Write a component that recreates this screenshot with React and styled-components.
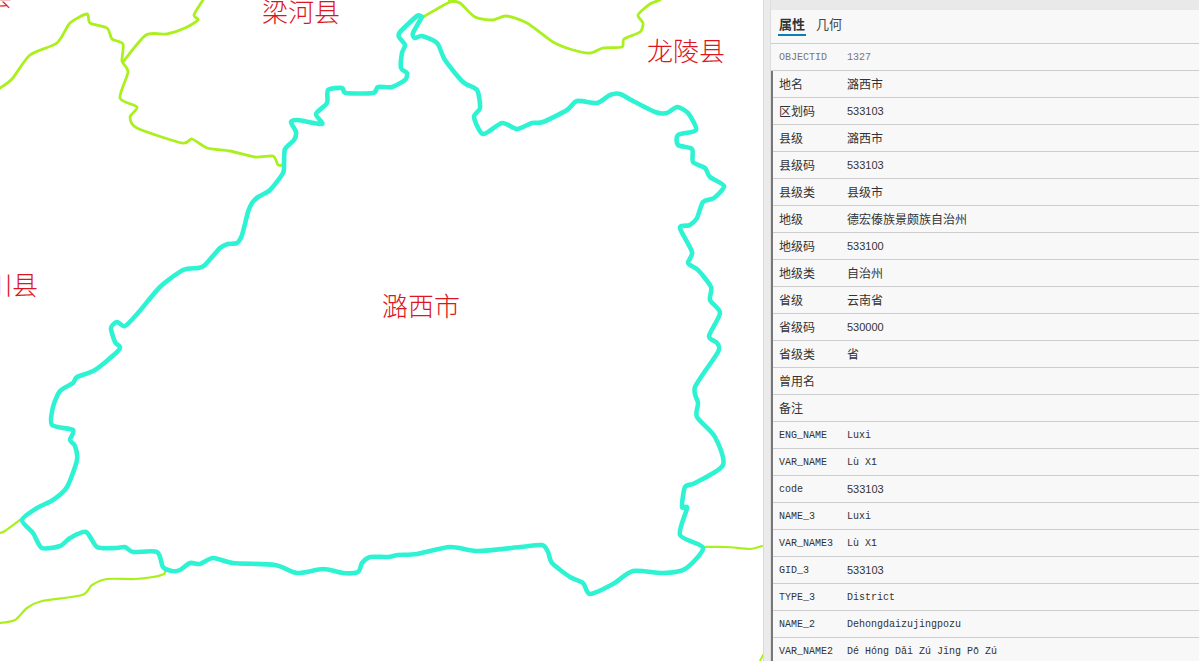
import React from "react";
import styled, { createGlobalStyle } from "styled-components";

const GlobalStyle = createGlobalStyle`
  html, body {
    margin: 0;
    padding: 0;
    background: #fff;
    overflow: hidden;
  }
  * {
    box-sizing: border-box;
  }
`;

const CJK = `"Noto Sans CJK SC", "Liberation Sans", sans-serif`;

// county boundary, traced counter-clockwise from the northern tip
const boundary =
  "422,17 417,16 400,32 399,37 405,45 402,53 401,68 407,73 405,80 392,87 378,87 373,93 346,93 342,88 328,90 327,103 316,114 322,124 298,120 291,122 296,132 294,140 285,149 284,163 283,173 270,190 258,197 252,203 248,212 242,235 237,243 228,244 220,248 205,265 198,268 183,270 160,287 138,313 125,326 117,322 111,328 115,342 120,347 117,352 95,370 77,377 73,383 60,391 53,407 52,425 73,430 70,440 75,446 77,460 67,487 53,500 37,508 22,520 33,533 42,548 60,546 70,538 86,532 97,547 115,548 125,547 133,552 157,552 163,567 172,571 180,570 190,563 200,564 213,558 233,563 275,565 297,573 323,569 343,573 358,572 362,563 370,557 388,557 398,555 417,554 450,547 478,551 520,547 542,545 548,552 552,563 570,577 583,583 590,594 613,584 633,571 663,573 685,569 703,548 680,535 687,508 682,507 685,487 695,483 723,465 715,437 697,417 698,403 695,387 718,352 717,343 709,336 720,313 710,300 711,287 698,270 688,263 692,252 680,228 690,225 697,218 703,202 714,198 724,186 710,177 705,168 693,162 692,149 678,145 678,135 696,130 688,113 677,107 667,113 655,112 635,102 620,94 610,95 597,103 577,101 567,110 543,122 532,123 517,129 502,123 483,134 474,117 480,108 477,90 463,82 445,60 437,43 422,36 415,38 413,33 422,17";

const neighbours = [
  { width: 2.8, points: "0,88 12,79 30,55 57,43 70,23 87,14 90,23 107,28 112,39 123,44 122,61 128,72 120,98 137,107 130,117 137,128 182,143 192,139 207,148 230,151 255,157 273,156 278,165 283,165" },
  { width: 2.8, points: "123,62 146,35 167,34 185,28 198,20 194,15 203,0" },
  { width: 2.8, points: "423,17 450,2 460,3 475,17 493,20 506,16 527,23 553,42 573,50 590,53 603,48 622,47 624,39 640,32 643,23 638,15 650,4 660,0" },
  { width: 2.2, points: "449,0 450,2" },
  { width: 2.2, points: "0,533 5,531 20,520" },
  { width: 2.2, points: "165,571 164,574 153,577 135,579 107,579 92,585 82,595 42,601 27,608 15,620 0,623" },
  { width: 2.2, points: "703,547 727,547 750,549 762,546" },
  { width: 2, points: "760,661 763,655" },
];

const labels = [
  { text: "县", x: -14, y: -21 },
  { text: "梁河县", x: 262, y: -5 },
  { text: "龙陵县", x: 647, y: 34 },
  { text: "川县", x: -14, y: 268 },
  { text: "潞西市", x: 382, y: 289 },
];

const rows = [
  ["地名", "潞西市"],
  ["区划码", "533103"],
  ["县级", "潞西市"],
  ["县级码", "533103"],
  ["县级类", "县级市"],
  ["地级", "德宏傣族景颇族自治州"],
  ["地级码", "533100"],
  ["地级类", "自治州"],
  ["省级", "云南省"],
  ["省级码", "530000"],
  ["省级类", "省"],
  ["曾用名", ""],
  ["备注", ""],
  ["ENG_NAME", "Luxi"],
  ["VAR_NAME", "Lù Xī"],
  ["code", "533103"],
  ["NAME_3", "Luxi"],
  ["VAR_NAME3", "Lù Xī"],
  ["GID_3", "533103"],
  ["TYPE_3", "District"],
  ["NAME_2", "Dehongdaizujingpozu"],
  ["VAR_NAME2", "Dé Hóng Dǎi Zú Jǐng Pō Zú"],
];

const kindOf = (s) => {
  if (/^\d+$/.test(s)) return "num";
  if (/[\u4e00-\u9fff]/.test(s)) return "cjk";
  return "latin";
};

// soft curve through the traced points, the map lines have no hard kinks
const smoothPath = (str) => {
  const p = str.split(" ").map((xy) => xy.split(",").map(Number));
  let d = `M${p[0][0]} ${p[0][1]}`;
  for (let i = 0; i < p.length - 1; i++) {
    const a = p[Math.max(i - 1, 0)];
    const b = p[i];
    const c = p[i + 1];
    const e = p[Math.min(i + 2, p.length - 1)];
    const c1x = (b[0] + (c[0] - a[0]) / 8).toFixed(1);
    const c1y = (b[1] + (c[1] - a[1]) / 8).toFixed(1);
    const c2x = (c[0] - (e[0] - b[0]) / 8).toFixed(1);
    const c2y = (c[1] - (e[1] - b[1]) / 8).toFixed(1);
    d += `C${c1x} ${c1y} ${c2x} ${c2y} ${c[0]} ${c[1]}`;
  }
  return d;
};

const Page = styled.div`
  display: flex;
  width: 1199px;
  height: 661px;
  overflow: hidden;
`;

const MapPane = styled.div`
  position: relative;
  width: 763px;
  flex: none;
  background: #fff;
  overflow: hidden;
`;

const MapLines = styled.svg`
  position: absolute;
  inset: 0;
  width: 763px;
  height: 661px;
  fill: none;
  stroke-linejoin: round;
  stroke-linecap: round;
`;

const MapLabel = styled.span`
  position: absolute;
  font-family: ${CJK};
  font-size: 26px;
  line-height: 32px;
  font-weight: 300;
  color: #dc1620;
  white-space: nowrap;
`;

const Gutter = styled.div`
  width: 7px;
  flex: none;
  background: #ebebeb;
  border-left: 1px solid #d9d9d9;
`;

const Panel = styled.div`
  flex: 1;
  min-width: 0;
  display: flex;
  flex-direction: column;
  background: #f8f8f8;
  border-left: 1px solid #dcdcdc;
`;

const TopStrip = styled.div`
  height: 10px;
  flex: none;
  background: #e9e9e9;
`;

const Tabs = styled.div`
  height: 34px;
  flex: none;
  display: flex;
  gap: 9px;
  padding-left: 7px;
  border-bottom: 1px solid #cdcdcd;
`;

const Tab = styled.div`
  height: 26px;
  padding: 0 1px;
  font-family: ${CJK};
  font-size: 13px;
  line-height: 28px;
  font-weight: ${(p) => (p.$active ? 700 : 400)};
  color: ${(p) => (p.$active ? "#333" : "#444")};
  border-bottom: 2px solid ${(p) => (p.$active ? "#0f7db3" : "transparent")};
`;

const FirstRow = styled.div`
  height: 27px;
  flex: none;
  display: flex;
  align-items: center;
  padding-left: 8px;
  border-bottom: 1px solid #cdcdcd;
  color: #777;
`;

const RowList = styled.div`
  border-left: 2px solid #777;
`;

const Row = styled.div`
  height: 27px;
  display: flex;
  align-items: center;
  padding-left: 6px;
  border-bottom: 1px solid #cdcdcd;
  color: #333;
`;

const Cell = styled.span`
  width: ${(p) => (p.$key ? "68px" : "auto")};
  flex: none;
  white-space: nowrap;
  margin-top: ${(p) => (p.$kind === "cjk" ? "-2px" : "0")};
  font-family: ${(p) =>
    p.$kind === "latin"
      ? `"Liberation Mono", monospace`
      : p.$kind === "num"
      ? `"Liberation Sans", sans-serif`
      : CJK};
  font-size: ${(p) =>
    p.$kind === "latin" ? "10px" : p.$kind === "num" ? "11px" : "12px"};
`;

export default function App() {
  return (
    <Page>
      <GlobalStyle />
      <MapPane>
        <MapLines viewBox="0 0 763 661">
          {neighbours.map((line, i) => (
            <path key={i} d={smoothPath(line.points)} stroke="#a9f01c" strokeWidth={line.width} />
          ))}
          <path d={smoothPath(boundary)} stroke="#2ef3d3" strokeWidth="4.6" />
        </MapLines>
        {labels.map((l) => (
          <MapLabel key={l.text + l.x} style={{ left: l.x, top: l.y }}>
            {l.text}
          </MapLabel>
        ))}
      </MapPane>
      <Gutter />
      <Panel>
        <TopStrip />
        <Tabs>
          <Tab $active>属性</Tab>
          <Tab>几何</Tab>
        </Tabs>
        <FirstRow>
          <Cell $key $kind="latin">OBJECTID</Cell>
          <Cell $kind="latin">1327</Cell>
        </FirstRow>
        <RowList>
          {rows.map(([name, value]) => (
            <Row key={name}>
              <Cell $key $kind={kindOf(name)}>{name}</Cell>
              <Cell $kind={kindOf(value)}>{value}</Cell>
            </Row>
          ))}
        </RowList>
      </Panel>
    </Page>
  );
}
